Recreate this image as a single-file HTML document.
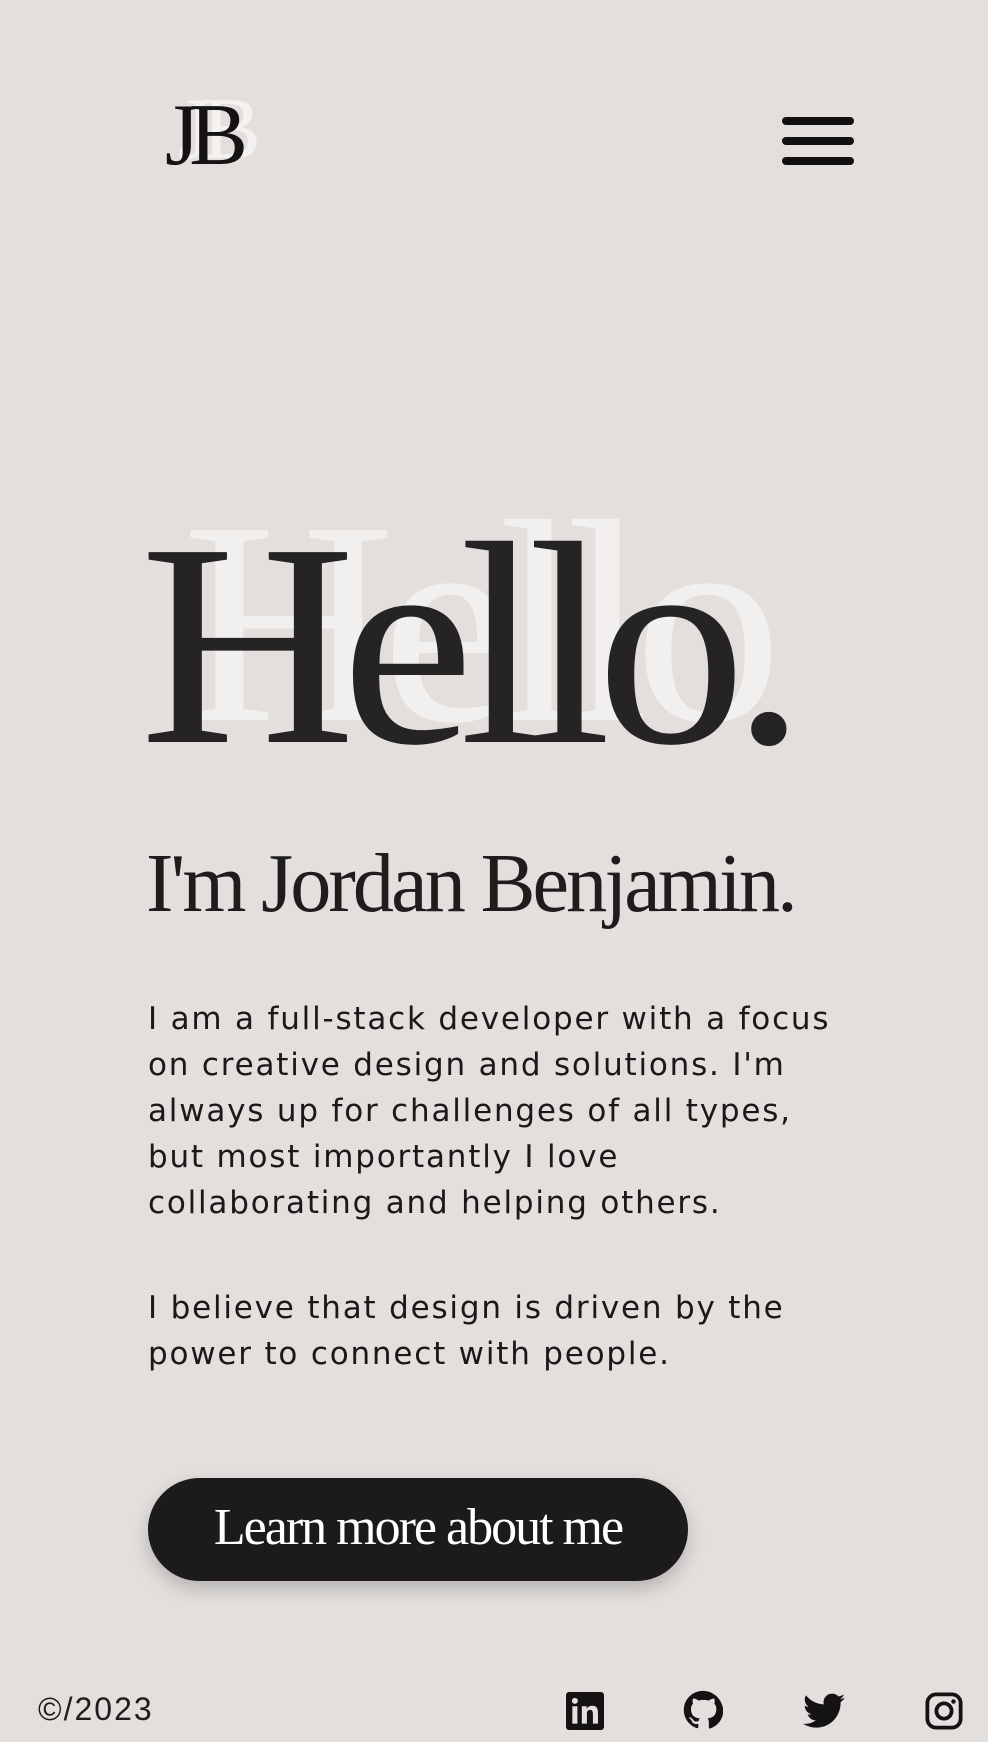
<!DOCTYPE html>
<html><head><meta charset="utf-8"><style>
*{margin:0;padding:0;box-sizing:border-box}
body{width:988px;height:1742px;background:#e2dfdd;position:relative;overflow:hidden;font-family:"Liberation Sans",sans-serif;color:#1e1c1d}
.abs{position:absolute}
.serif{font-family:"Liberation Serif",serif}
.bar{position:absolute;left:782px;width:72px;height:8px;background:#111;border-radius:4px}
p.t{position:absolute;left:148px;white-space:nowrap;font-family:"DejaVu Sans",sans-serif;font-size:31px;line-height:46px;color:#1a1819;letter-spacing:1.8px}
</style></head><body>
<div class="abs serif" style="left:178px;top:86px;font-size:88px;color:#f4f2f1;letter-spacing:-10px;line-height:1">JB</div>
<div class="abs serif" style="left:165px;top:92px;font-size:88px;color:#141213;letter-spacing:-10px;line-height:1">JB</div>
<div class="bar" style="top:117px"></div>
<div class="bar" style="top:137px"></div>
<div class="bar" style="top:157px"></div>
<div class="abs serif" style="left:182px;top:478px;font-size:290px;line-height:1;color:#f2f0ef;letter-spacing:-14px;transform:scaleX(1.02);transform-origin:left">Hello</div>
<div class="abs serif" style="left:140px;top:500px;font-size:290px;line-height:1;color:#252324;letter-spacing:-14px;transform:scaleX(1.03);transform-origin:left">Hello.</div>
<div class="abs serif" style="left:146px;top:842px;font-size:84px;line-height:1;color:#1e1c1d;letter-spacing:-3px;transform:scaleX(0.98);transform-origin:left">I'm Jordan Benjamin.</div>
<p class="t" style="top:996px">I am a full-stack developer with a focus<br>on creative design and solutions. I'm<br>always up for challenges of all types,<br>but most importantly I love<br>collaborating and helping others.</p>
<p class="t" style="top:1285px">I believe that design is driven by the<br>power to connect with people.</p>
<div class="abs" style="left:148px;top:1478px;width:540px;height:103px;border-radius:52px;background:#1c1a1b;box-shadow:0 8px 18px rgba(0,0,0,.2)"></div>
<div class="abs serif" style="left:148px;top:1496px;width:540px;text-align:center;font-size:52px;line-height:64px;color:#fff;letter-spacing:-2px">Learn more about me</div>
<div class="abs" style="left:38px;top:1691px;font-size:32px;color:#1e1c1d;letter-spacing:2px">©/2023</div>
<svg class="abs" style="left:566px;top:1692px" width="38" height="38" viewBox="0 0 24 24"><rect width="24" height="24" rx="2" fill="#141213"/><rect x="4" y="9" width="3.2" height="11" fill="#e2dfdd"/><circle cx="5.6" cy="5.6" r="1.9" fill="#e2dfdd"/><path d="M10 9h3v1.6c.6-1 1.8-1.9 3.6-1.9 3 0 3.6 2 3.6 4.6V20h-3.2v-5.8c0-1.4-.1-2.9-1.8-2.9s-2 1.3-2 2.8V20H10z" fill="#e2dfdd"/></svg>
<svg class="abs" style="left:683px;top:1690px" width="40" height="40" viewBox="0 0 24 24"><path fill="#141213" d="M12 .5C5.6.5.5 5.6.5 12c0 5.1 3.3 9.4 7.9 10.9.6.1.8-.2.8-.6v-2c-3.2.7-3.9-1.5-3.9-1.5-.5-1.3-1.3-1.7-1.3-1.7-1.1-.7.1-.7.1-.7 1.2.1 1.8 1.2 1.8 1.2 1 1.8 2.8 1.3 3.5 1 .1-.8.4-1.3.7-1.6-2.6-.3-5.3-1.3-5.3-5.7 0-1.3.5-2.3 1.2-3.1-.1-.3-.5-1.5.1-3.1 0 0 1-.3 3.3 1.2a11.5 11.5 0 0 1 6 0c2.3-1.5 3.3-1.2 3.3-1.2.6 1.6.2 2.8.1 3.1.8.8 1.2 1.9 1.2 3.1 0 4.4-2.7 5.4-5.3 5.7.4.4.8 1.1.8 2.2v3.3c0 .3.2.7.8.6 4.6-1.5 7.9-5.8 7.9-10.9C23.5 5.6 18.4.5 12 .5z"/></svg>
<svg class="abs" style="left:803px;top:1692px" width="42" height="38" viewBox="0 0 24 20"><path fill="#141213" d="M24 2.4c-.9.4-1.8.7-2.8.8 1-.6 1.8-1.6 2.2-2.7-1 .6-2 1-3.1 1.2A4.9 4.9 0 0 0 11.9 6.2 14 14 0 0 1 1.7 1 4.9 4.9 0 0 0 3.2 7.6c-.8 0-1.6-.3-2.2-.6 0 2.4 1.7 4.4 3.9 4.8-.7.2-1.5.2-2.2.1.6 2 2.4 3.4 4.6 3.4A9.9 9.9 0 0 1 0 17.3 14 14 0 0 0 7.5 19.5c9 0 14-7.5 14-14v-.6c1-.7 1.8-1.6 2.5-2.5z"/></svg>
<svg class="abs" style="left:925px;top:1692px" width="38" height="38" viewBox="0 0 24 24"><rect x="1.5" y="1.5" width="21" height="21" rx="5.5" fill="none" stroke="#141213" stroke-width="2.4"/><circle cx="12" cy="12" r="4.8" fill="none" stroke="#141213" stroke-width="2.4"/><circle cx="18" cy="6" r="1.4" fill="#141213"/></svg>
</body></html>
